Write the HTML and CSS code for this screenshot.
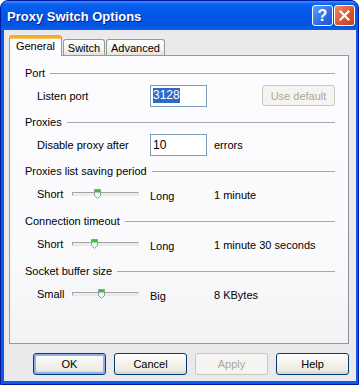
FILE: index.html
```html
<!DOCTYPE html>
<html lang="en">
<head>
    <meta charset="UTF-8">
    <title>Proxy Switch Options</title>
    <link rel="stylesheet" href="styles.css">
</head>
<body>
    <div class="window">
        <!-- title bar -->
        <div class="titlebar">
            <span class="title">Proxy Switch Options</span>
            <div class="title-buttons">
                <span class="tbtn help">?</span>
                <span class="tbtn close">
                    <svg width="11" height="11" viewBox="0 0 11 11"><path d="M1.5 1.5 L9.5 9.5 M9.5 1.5 L1.5 9.5" stroke="#fff" stroke-width="2.2" stroke-linecap="square"/></svg>
                </span>
            </div>
        </div>
        <div class="frame">
            <div class="client">
                <!-- tabs -->
                <div class="tabs">
                    <span class="tab active">General</span>
                    <span class="tab">Switch</span>
                    <span class="tab">Advanced</span>
                </div>
                <div class="panel">
                    <!-- Port -->
                    <div class="group-title"><span>Port</span><i class="line"></i></div>
                    <div class="row">
                        <span class="label">Listen port</span>
                        <span class="edit"><span class="sel">3128</span></span>
                        <span class="btn disabled use-default">Use default</span>
                    </div>
                    <!-- Proxies -->
                    <div class="group-title"><span>Proxies</span><i class="line"></i></div>
                    <div class="row">
                        <span class="label">Disable proxy after</span>
                        <span class="edit">10</span>
                        <span class="unit">errors</span>
                    </div>
                    <!-- saving period -->
                    <div class="group-title"><span>Proxies list saving period</span><i class="line"></i></div>
                    <div class="row slider-row">
                        <span>Short</span>
                        <span class="track"><span class="thumb" style="left: 32%"><svg width="7" height="10" viewBox="0 0 7 10"><path d="M0.5 0.5 H6.5 V6.5 L3.5 9.5 L0.5 6.5 Z" fill="#f5f5f1" stroke="#8a99a6"/><rect x="1" y="1" width="5" height="2.5" fill="#3cbf3c"/></svg></span></span>
                        <span class="lo">Long</span>
                        <span class="val">1 minute</span>
                    </div>
                    <!-- timeout -->
                    <div class="group-title"><span>Connection timeout</span><i class="line"></i></div>
                    <div class="row slider-row">
                        <span>Short</span>
                        <span class="track"><span class="thumb" style="left: 27%"><svg width="7" height="10" viewBox="0 0 7 10"><path d="M0.5 0.5 H6.5 V6.5 L3.5 9.5 L0.5 6.5 Z" fill="#f5f5f1" stroke="#8a99a6"/><rect x="1" y="1" width="5" height="2.5" fill="#3cbf3c"/></svg></span></span>
                        <span class="lo">Long</span>
                        <span class="val">1 minute 30 seconds</span>
                    </div>
                    <!-- buffer -->
                    <div class="group-title"><span>Socket buffer size</span><i class="line"></i></div>
                    <div class="row slider-row">
                        <span>Small</span>
                        <span class="track"><span class="thumb" style="left: 38%"><svg width="7" height="10" viewBox="0 0 7 10"><path d="M0.5 0.5 H6.5 V6.5 L3.5 9.5 L0.5 6.5 Z" fill="#f5f5f1" stroke="#8a99a6"/><rect x="1" y="1" width="5" height="2.5" fill="#3cbf3c"/></svg></span></span>
                        <span class="lo">Big</span>
                        <span class="val">8 KBytes</span>
                    </div>
                </div>
                <!-- dialog buttons -->
                <div class="buttons">
                    <span class="btn default">OK</span>
                    <span class="btn">Cancel</span>
                    <span class="btn disabled">Apply</span>
                    <span class="btn">Help</span>
                </div>
            </div>
        </div>
    </div>
</body>
</html>
```

FILE: styles.css
```css
body {
    margin: 0;
    background: #ffffff;
    font-family: Tahoma, "Liberation Sans", "DejaVu Sans", sans-serif;
    font-size: 11px;
    color: #000;
}
.window {
    width: 359px;
    height: 385px;
    box-sizing: border-box;
    border: 1px solid #0019a0;
    border-radius: 8px 8px 0 0;
    overflow: hidden;
    display: flex;
    flex-direction: column;
    background: #0a5ae6;
}
.titlebar {
    height: 29px;
    flex: 0 0 29px;
    display: flex;
    align-items: center;
    justify-content: space-between;
    padding: 0 3px 0 6px;
    background: linear-gradient(#3d8fff 0, #0a62f0 3px, #0058e8 40%, #0054e2 85%, #0b60ee 100%);
}
.title {
    color: #fff;
    font-weight: bold;
    font-size: 13px;
    text-shadow: 1px 1px #0a1c8a;
    margin-top: 1px;
}
.title-buttons {
    display: flex;
    gap: 1px;
}
.tbtn {
    width: 21px;
    height: 21px;
    box-sizing: border-box;
    border: 1px solid #fff;
    border-radius: 3px;
    display: flex;
    align-items: center;
    justify-content: center;
    color: #fff;
}
.help {
    background: linear-gradient(135deg, #5d9dff, #2763e0 70%, #1d52cf);
    font-weight: bold;
    font-size: 16px;
}
.close {
    background: linear-gradient(135deg, #f08a66, #d9532c 60%, #c23e1c);
}
.frame {
    flex: 1;
    padding: 0 3px 3px;
    display: flex;
}
.client {
    flex: 1;
    background: #ece9ec;
    padding: 5px 7px 0 5px;
    display: flex;
    flex-direction: column;
}
.tabs {
    display: flex;
    align-items: flex-end;
    height: 20px;
    gap: 1px;
    position: relative;
    z-index: 1;
}
.tab {
    height: 16px;
    box-sizing: border-box;
    border: 1px solid #919b9c;
    border-bottom: none;
    border-radius: 3px 3px 0 0;
    background: linear-gradient(#ffffff, #f3f3ef 60%, #e4e3dc);
    display: flex;
    align-items: center;
    justify-content: center;
    padding-top: 1px;
}
.tab:nth-child(2) { width: 42px; }
.tab:nth-child(3) { width: 59px; }
.tab.active {
    width: 53px;
    height: 21px;
    margin-bottom: -1px;
    background: #fcfcfe;
    border-top: 3px solid #f5a836;
    box-shadow: inset 0 1px 0 #ffc95c;
    padding-top: 0;
    padding-bottom: 3px;
}
.panel {
    height: 289px;
    box-sizing: border-box;
    border: 1px solid #919b9c;
    border-right-color: #8a9495;
    background: linear-gradient(#fcfcfe, #fafafc 70%, #f3f3f5);
    padding-top: 10px;
}
.group-title {
    height: 14px;
    display: flex;
    align-items: center;
    gap: 5px;
    padding: 0 13px 0 15px;
    margin-top: 8px;
}
.group-title:first-child {
    margin-top: 0;
}
.line {
    flex: 1;
    height: 1px;
    background: #a8a8ac;
}
.row {
    display: grid;
    grid-template-columns: 35px 78px 64px 1fr;
    align-items: center;
    height: 23px;
    padding-left: 27px;
    margin-top: 4px;
}
.slider-row {
    height: 24px;
}
.label {
    grid-column: span 2;
}
.edit {
    width: 57px;
    height: 22px;
    box-sizing: border-box;
    border: 1px solid #7f9db9;
    background: #fff;
    display: flex;
    align-items: center;
    padding-left: 2px;
    font-size: 12px;
}
.sel {
    background: #316ac5;
    color: #fff;
    line-height: 15px;
}
.track {
    width: 67px;
    height: 4px;
    box-sizing: border-box;
    border: 1px solid #a3a3a3;
    border-right-color: #e8e8e8;
    border-bottom-color: #e8e8e8;
    background: #eeeee8;
    position: relative;
}
.thumb {
    position: absolute;
    top: -4px;
    line-height: 0;
}
.lo {
    padding-top: 4px;
}
.val {
    padding-top: 2px;
}
.btn {
    width: 73px;
    height: 22px;
    box-sizing: border-box;
    border: 1px solid #003c74;
    border-radius: 3px;
    background: linear-gradient(#ffffff, #f4f3ee 40%, #ecebe6 80%, #d6d0c5);
    display: flex;
    align-items: center;
    justify-content: center;
}
.btn.default {
    box-shadow: inset 0 0 0 2px #8fb0ec;
}
.btn.disabled {
    border-color: #c9c7ba;
    background: #f5f4f0;
    color: #aca899;
}
.use-default {
    margin-left: 48px;
    height: 21px;
}
.buttons {
    display: flex;
    gap: 8px;
    padding-left: 24px;
    margin-top: 9px;
}
```
